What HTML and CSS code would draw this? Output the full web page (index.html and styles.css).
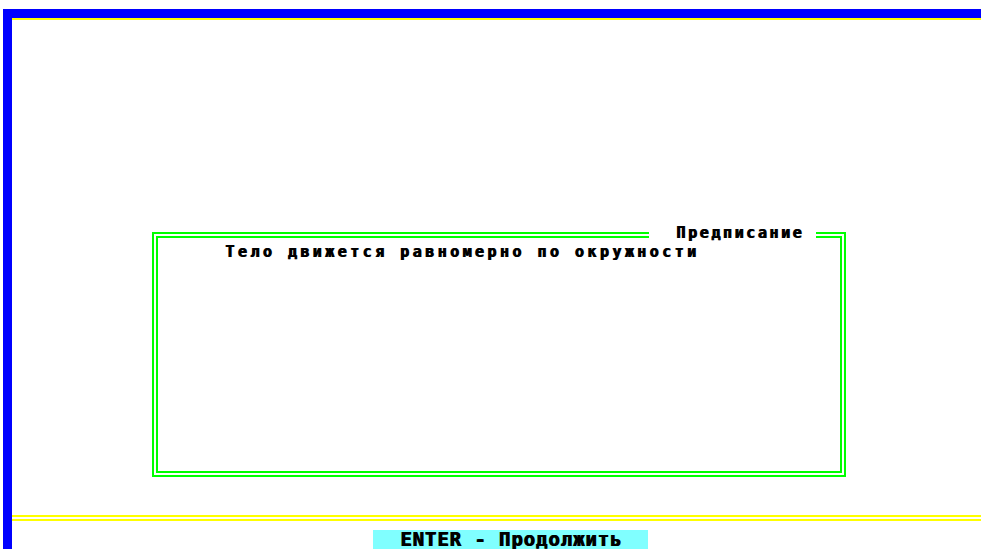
FILE: index.html
```html
<!DOCTYPE html>
<html lang="ru">
<head>
<meta charset="utf-8">
<title>Предписание</title>
<link rel="stylesheet" href="styles.css">
</head>
<body>
<div class="screen">
  <div class="frame">
    <div class="rule-top"></div>
    <div class="workspace">
      <section class="dialog">
        <h2 class="dialog-title">Предписание</h2>
        <p class="dialog-text">Тело движется равномерно по окружности</p>
      </section>
    </div>
    <div class="rule-bottom"></div>
    <div class="statusbar">
      <div class="hint"><span class="hint-text">ENTER - Продолжить</span></div>
    </div>
  </div>
</div>
</body>
</html>
```

FILE: styles.css
```css
* { box-sizing: border-box; }

html, body {
  margin: 0;
  padding: 0;
  background: #ffffff;
}

body {
  width: 981px;
  height: 549px;
  overflow: hidden;
  font-family: "DejaVu Sans Mono", "Liberation Mono", monospace;
  font-weight: bold;
  font-size: 15px;
  letter-spacing: 3.45px;
  color: #000000;
  /* doubled-pixel look of the text-mode font */
  text-shadow: 1px 0 0 #000000;
}

.screen {
  width: 981px;
  height: 549px;
  padding: 9px 0 0 3px;
}

/* blue outer frame: top bar and left bar */
.frame {
  height: 100%;
  border-top: 9px solid #0000ff;
  border-left: 9px solid #0000ff;
  display: flex;
  flex-direction: column;
}

.rule-top {
  height: 2px;
  background: #ffff00;
  flex: none;
}

.workspace {
  flex: 1;
  padding: 212px 0 0 140px;
}

/* double green box */
.dialog {
  position: relative;
  width: 694px;
  height: 245px;
  border: 6px double #00ff00;
  padding: 7px 0 0 67px;
}

.dialog-title {
  position: absolute;
  top: -12px;
  left: 491px;
  margin: 0;
  padding: 0 12px 0 27px;
  background: #ffffff;
  font-size: 15px;
  font-weight: bold;
  line-height: 14px;
  letter-spacing: 2.6px;
  white-space: nowrap;
}

.dialog-text {
  margin: 0;
  line-height: 14px;
  white-space: nowrap;
}

/* yellow double rule above the status line */
.rule-bottom {
  flex: none;
  height: 6px;
  border-top: 2px solid #ffff00;
  border-bottom: 2px solid #ffff00;
}

.statusbar {
  flex: none;
  height: 28px;
  padding: 9px 0 0 361px;
}

.hint {
  width: 275px;
  height: 19px;
  background: #80ffff;
  text-align: center;
}

.hint-text {
  display: inline-block;
  font-size: 19px;
  line-height: 19px;
  letter-spacing: 0.9px;
  margin-right: -0.9px;
  white-space: nowrap;
}
```
